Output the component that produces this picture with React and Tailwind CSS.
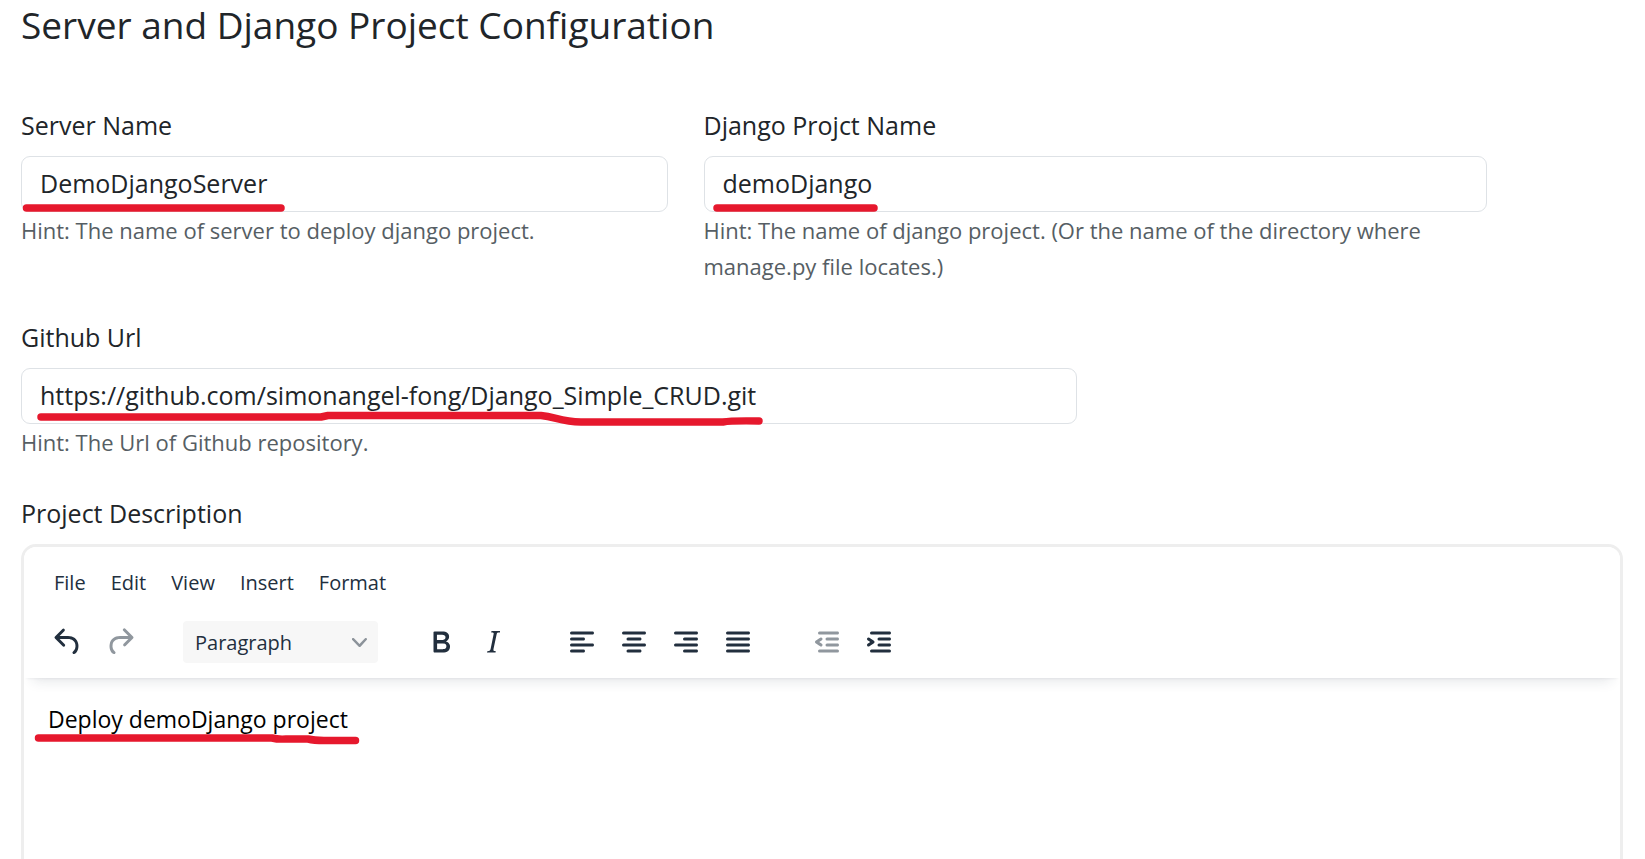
import React from "react";

const ICONS = {
  undo: "M6.4 8H12c3.7 0 6.2 2 6.8 5.1.6 2.7-.4 5.6-2.3 6.8a1 1 0 0 1-1-1.8c1.1-.6 1.8-2.7 1.4-4.6-.5-2.1-2.1-3.5-4.9-3.5H6.4l3.3 3.3a1 1 0 1 1-1.4 1.4l-5-5a1 1 0 0 1 0-1.4l5-5a1 1 0 0 1 1.4 1.4L6.4 8Z",
  redo: "M17.6 10H12c-2.8 0-4.4 1.4-4.9 3.5-.4 2 .3 4 1.4 4.6a1 1 0 1 1-1 1.8c-2-1.2-2.9-4.1-2.3-6.8.6-3 3-5.1 6.8-5.1h5.6l-3.3-3.3a1 1 0 1 1 1.4-1.4l5 5a1 1 0 0 1 0 1.4l-5 5a1 1 0 0 1-1.4-1.4l3.3-3.3Z",
  bold: "M7.8 19c-.3 0-.5 0-.6-.2l-.2-.5V5.7c0-.2 0-.4.2-.5l.6-.2h5c1.5 0 2.7.3 3.5 1 .7.6 1.1 1.4 1.1 2.5a3 3 0 0 1-.6 1.9c-.4.6-1 1-1.6 1.2.4.1.9.3 1.3.6s.8.7 1 1.2c.4.4.5 1 .5 1.6 0 1.3-.4 2.3-1.3 3-.8.7-2.1 1-3.8 1H7.8Zm5-8.3c.6 0 1.2-.1 1.6-.5.4-.3.6-.7.6-1.3 0-1.1-.8-1.7-2.3-1.7H9.3v3.5h3.4Zm.5 6c.7 0 1.3-.1 1.7-.4.4-.4.6-.9.6-1.5s-.2-1-.7-1.4c-.4-.3-1-.4-2-.4H9.4v3.8h4Z",
  italic: "m16.7 4.7-.1.9h-.3c-.6 0-1 0-1.4.3-.3.3-.4.6-.5 1.1l-2.1 9.8v.6c0 .5.4.8 1.4.8h.2l-.2.8H8l.2-.8h.2c1.1 0 1.8-.5 2-1.5l2-9.8.1-.5c0-.6-.4-.8-1.4-.8h-.3l.2-.9h5.8Z",
  alignLeft: "M5 5h14c.6 0 1 .4 1 1s-.4 1-1 1H5a1 1 0 1 1 0-2Zm0 4h8c.6 0 1 .4 1 1s-.4 1-1 1H5a1 1 0 1 1 0-2Zm0 8h8c.6 0 1 .4 1 1s-.4 1-1 1H5a1 1 0 0 1 0-2Zm0-4h14c.6 0 1 .4 1 1s-.4 1-1 1H5a1 1 0 0 1 0-2Z",
  alignCenter: "M5 5h14c.6 0 1 .4 1 1s-.4 1-1 1H5a1 1 0 1 1 0-2Zm3 4h8c.6 0 1 .4 1 1s-.4 1-1 1H8a1 1 0 1 1 0-2Zm0 8h8c.6 0 1 .4 1 1s-.4 1-1 1H8a1 1 0 0 1 0-2Zm-3-4h14c.6 0 1 .4 1 1s-.4 1-1 1H5a1 1 0 0 1 0-2Z",
  alignRight: "M5 5h14c.6 0 1 .4 1 1s-.4 1-1 1H5a1 1 0 1 1 0-2Zm6 4h8c.6 0 1 .4 1 1s-.4 1-1 1h-8a1 1 0 0 1 0-2Zm0 8h8c.6 0 1 .4 1 1s-.4 1-1 1h-8a1 1 0 0 1 0-2Zm-6-4h14c.6 0 1 .4 1 1s-.4 1-1 1H5a1 1 0 0 1 0-2Z",
  justify: "M5 5h14c.6 0 1 .4 1 1s-.4 1-1 1H5a1 1 0 1 1 0-2Zm0 4h14c.6 0 1 .4 1 1s-.4 1-1 1H5a1 1 0 1 1 0-2Zm0 4h14c.6 0 1 .4 1 1s-.4 1-1 1H5a1 1 0 0 1 0-2Zm0 4h14c.6 0 1 .4 1 1s-.4 1-1 1H5a1 1 0 0 1 0-2Z",
  outdent: "M7 5h12c.6 0 1 .4 1 1s-.4 1-1 1H7a1 1 0 1 1 0-2Zm5 4h7c.6 0 1 .4 1 1s-.4 1-1 1h-7a1 1 0 0 1 0-2Zm0 4h7c.6 0 1 .4 1 1s-.4 1-1 1h-7a1 1 0 0 1 0-2Zm-5 4h12a1 1 0 0 1 0 2H7a1 1 0 0 1 0-2Zm1.6-3.8a1 1 0 0 1-1.2 1.6l-3-2a1 1 0 0 1 0-1.6l3-2a1 1 0 0 1 1.2 1.6L6.8 12l1.8 1.2Z",
  indent: "M7 5h12c.6 0 1 .4 1 1s-.4 1-1 1H7a1 1 0 1 1 0-2Zm5 4h7c.6 0 1 .4 1 1s-.4 1-1 1h-7a1 1 0 0 1 0-2Zm0 4h7c.6 0 1 .4 1 1s-.4 1-1 1h-7a1 1 0 0 1 0-2Zm-5 4h12a1 1 0 0 1 0 2H7a1 1 0 0 1 0-2Zm-2.6-3.8L6.2 12l-1.8-1.2a1 1 0 0 1 1.2-1.6l3 2a1 1 0 0 1 0 1.6l-3 2a1 1 0 1 1-1.2-1.6Z",
};

function ToolButton({ icon, label, disabled }) {
  return (
    <button
      type="button"
      aria-label={label}
      disabled={disabled}
      className="flex h-[42px] w-[52px] items-center justify-center text-[#222f3e] disabled:text-[#222f3e]/50"
    >
      <svg viewBox="0 0 24 24" className="size-9" fill="currentColor" aria-hidden="true">
        <path fillRule="evenodd" d={ICONS[icon]} />
      </svg>
    </button>
  );
}

// Hand-drawn red marker line laid over a field.
function Marker({ d }) {
  return (
    <svg
      className="pointer-events-none absolute left-0 top-0 overflow-visible"
      width="10"
      height="10"
      fill="none"
      stroke="#e6182d"
      strokeWidth="7.5"
      strokeLinecap="round"
      strokeLinejoin="round"
      aria-hidden="true"
    >
      <path d={d} />
    </svg>
  );
}

function Field({ id, label, value, hint, marker, className }) {
  return (
    <div className={className}>
      <label htmlFor={id} className="mb-[14px] block text-[25px] leading-[34px]">
        {label}
      </label>
      <div className="relative">
        <input
          id={id}
          type="text"
          defaultValue={value}
          aria-describedby={`${id}-hint`}
          className="block h-14 w-full rounded-[9px] border border-[#dee2e6] bg-white px-[18px] pb-[2px] text-[25px] outline-none"
        />
        <Marker d={marker} />
      </div>
      <p id={`${id}-hint`} className="text-[22px] leading-9 text-[#565e64]">
        {hint}
      </p>
    </div>
  );
}

export default function App() {
  return (
    <main className="h-screen overflow-hidden bg-white pl-[21px] pr-[22px] font-['Open_Sans','Noto_Sans',sans-serif] text-[#212529]">
      <h1 className="mb-[58px] text-[37px] leading-[50px]">Server and Django Project Configuration</h1>

      <form className="grid grid-cols-12 gap-9">
        <Field
          id="server-name"
          label="Server Name"
          value="DemoDjangoServer"
          hint="Hint: The name of server to deploy django project."
          marker="M5.5 52H260"
          className="col-span-5"
        />
        <Field
          id="project-name"
          label="Django Projct Name"
          value="demoDjango"
          hint="Hint: The name of django project. (Or the name of the directory where manage.py file locates.)"
          marker="M13 52H170"
          className="col-span-6"
        />
        <Field
          id="github-url"
          label="Github Url"
          value="https://github.com/simonangel-fong/Django_Simple_CRUD.git"
          hint="Hint: The Url of Github repository."
          marker="M20 49H300L307 47.5H520C535 49 540 54 560 54H702Q710 52.5 738 53"
          className="col-span-8"
        />

        <div className="col-span-12">
          <label htmlFor="description" className="mb-[14px] block text-[25px] leading-[34px]">
            Project Description
          </label>
          <div className="overflow-hidden rounded-[15px] border-[3px] border-[#eee] bg-white text-[#222f3e]">
            <div className="relative bg-white px-[18px] py-[15px] shadow-[0_3px_3px_-3px_rgba(34,47,62,0.1),0_12px_12px_-9px_rgba(34,47,62,0.12)]">
              <nav className="flex h-[42px] items-center gap-[25px] px-3 text-[20px]">
                <button type="button">File</button>
                <button type="button">Edit</button>
                <button type="button">View</button>
                <button type="button">Insert</button>
                <button type="button">Format</button>
              </nav>
              <div className="mt-[17px] flex items-center gap-[37px]">
                <div className="flex">
                  <ToolButton icon="undo" label="Undo" />
                  <ToolButton icon="redo" label="Redo" disabled />
                </div>
                <div className="relative">
                  <select
                    aria-label="Block format"
                    className="block h-[42px] w-[195px] appearance-none rounded-[4px] bg-[#f7f7f7] pl-3 pt-[2px] text-[20px] outline-none"
                  >
                    <option>Paragraph</option>
                  </select>
                  <svg
                    viewBox="0 0 10 10"
                    className="pointer-events-none absolute right-[11px] top-[14px] size-[15px]"
                    fill="#222f3e"
                    fillOpacity="0.5"
                    aria-hidden="true"
                  >
                    <path d="M8.7 2.2c.3-.3.8-.3 1 0 .4.4.4.9 0 1.2L5.7 7.8c-.3.3-.9.3-1.2 0L.2 3.4a.8.8 0 0 1 0-1.2c.3-.3.8-.3 1.1 0L5 6l3.7-3.8Z" />
                  </svg>
                </div>
                <div className="flex">
                  <ToolButton icon="bold" label="Bold" />
                  <ToolButton icon="italic" label="Italic" />
                </div>
                <div className="flex">
                  <ToolButton icon="alignLeft" label="Align left" />
                  <ToolButton icon="alignCenter" label="Align center" />
                  <ToolButton icon="alignRight" label="Align right" />
                  <ToolButton icon="justify" label="Justify" />
                </div>
                <div className="flex">
                  <ToolButton icon="outdent" label="Decrease indent" disabled />
                  <ToolButton icon="indent" label="Increase indent" />
                </div>
              </div>
            </div>
            <div className="relative">
              <textarea
                id="description"
                defaultValue="Deploy demoDjango project"
                rows={8}
                className="block w-full resize-none bg-transparent p-6 text-[23px] leading-[34px] text-black outline-none"
              />
              <Marker d="M14.5 60H248Q254 61.5 262 61H284Q290 62.5 300 62.5H331.5" />
            </div>
          </div>
        </div>
      </form>
    </main>
  );
}
